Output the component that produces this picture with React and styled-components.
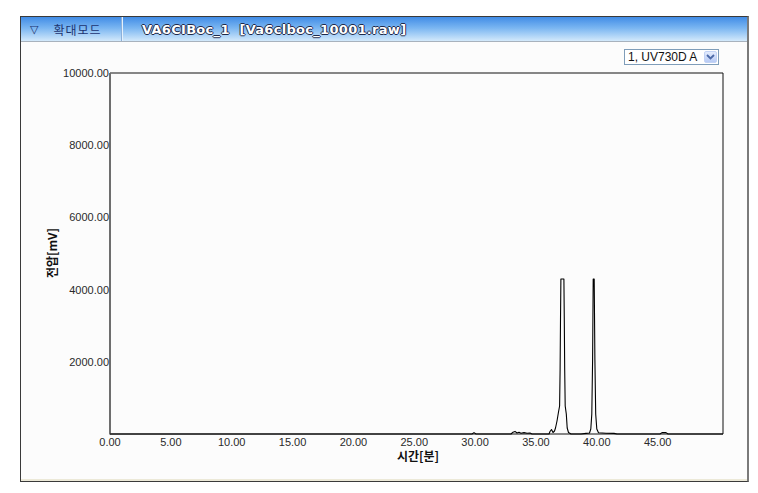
import React from 'react'
import styled, { createGlobalStyle } from 'styled-components'

// chromatogram window, page coordinates used inside the chart svg

const GlobalStyle = createGlobalStyle`
  html, body {
    margin: 0;
    padding: 0;
    background: #ffffff;
  }
  body {
    font-family: "Liberation Sans", Arial, sans-serif;
  }
`

const Page = styled.div`
  padding: 16px 0 0 20px;
`

const Window = styled.section`
  box-sizing: border-box;
  width: 729px;
  height: 466px;
  display: flex;
  flex-direction: column;
  background: #fcfcfc;
  border: 1px solid #3a3a3a;
  border-right: 2px solid #7a7a7a;
  box-shadow: inset 0 -2px 0 #ece9d8;
`

const TitleBar = styled.header`
  height: 24px;
  display: flex;
  align-items: stretch;
  background: linear-gradient(#418ce6, #79b5f1 45%, #d3e9fb);
  border-bottom: 1px solid #a8b2bd;
`

const ModeTab = styled.div`
  width: 101px;
  display: flex;
  align-items: center;
  gap: 14px;
  padding-left: 9px;
  box-sizing: border-box;
  border-right: 1px solid #8cb0da;
  box-shadow: 1px 0 0 #e4f0fc;
  color: #1c3370;
  font-family: "Noto Sans CJK KR", "DejaVu Sans", sans-serif;
  font-size: 12px;
  letter-spacing: 1px;
`

const Arrow = styled.span`
  font-family: "DejaVu Sans", sans-serif;
  font-size: 11px;
`

const Title = styled.h1`
  margin: 0;
  padding-left: 20px;
  display: flex;
  align-items: center;
  font-family: "DejaVu Sans", sans-serif;
  font-size: 13px;
  font-weight: bold;
  letter-spacing: 0.3px;
  color: #ffffff;
  white-space: pre;
  text-shadow: 1px 0 0 #1f2a4a, -1px 0 0 #1f2a4a, 0 1px 0 #1f2a4a, 0 -1px 0 #1f2a4a;
`

const Toolbar = styled.div`
  height: 23px;
  display: flex;
  justify-content: flex-end;
  align-items: flex-start;
  padding: 7px 28px 0 0;
  box-sizing: border-box;
`

const Select = styled.div`
  box-sizing: border-box;
  width: 95px;
  height: 16px;
  display: flex;
  align-items: center;
  justify-content: space-between;
  background: #ffffff;
  border: 1px solid #7f9db9;
  padding-left: 3px;
  font-size: 12px;
  color: #111;
`

const DropButton = styled.span`
  width: 13px;
  height: 12px;
  margin-right: 1px;
  display: flex;
  align-items: center;
  justify-content: center;
  border-radius: 2px;
  background: linear-gradient(#e4ecfd, #b8cbf5);
  border: 1px solid #c3d3f5;
  box-sizing: border-box;
`

const Chart = styled.svg`
  display: block;
  font-family: "Liberation Sans", Arial, sans-serif;
`

const plot = { left: 110, right: 723, top: 73, bottom: 434 }
const xTicks = [0, 5, 10, 15, 20, 25, 30, 35, 40, 45]
const yTicks = [2000, 4000, 6000, 8000, 10000]
const xPx = t => plot.left + t * 12.17
const yPx = v => plot.bottom - (v / 10000) * (plot.bottom - plot.top)

const trace = [
  [110, 434], [472, 434], [474, 432.6], [476, 434],
  [511, 434], [513, 432.2], [515, 431.4], [517, 433], [519, 432.2], [521, 433.2],
  [524, 432.6], [527, 433.3], [530, 433], [532, 434],
  [549, 434], [550, 431.5], [551.5, 429.5], [553, 432.5], [554.5, 431], [555.5, 428],
  [557, 421], [558.5, 412], [559.6, 406], [560.1, 370], [560.5, 320], [560.9, 279],
  [563.9, 279], [564.3, 320], [564.7, 370], [565.2, 406], [566.3, 414], [567.2, 428],
  [568.5, 432.5], [571, 434],
  [581, 434], [586, 433.4], [589.5, 433], [590.8, 429], [591.8, 414], [592.6, 360],
  [593.2, 279], [594.2, 279], [594.9, 360], [595.7, 414], [596.8, 429], [598.5, 432.8],
  [606, 433.2], [614, 433.4], [617, 434],
  [660, 434], [662, 432.6], [666, 432.6], [668, 434], [723, 434],
]

const tracePath = trace.map(([x, y], i) => `${i ? 'L' : 'M'}${x},${y}`).join(' ')

const Chromatogram = () => (
  <Chart width="726" height="416" viewBox="21 65 726 416">
    <line x1={plot.left} y1={plot.top} x2={plot.right} y2={plot.top} stroke="#111" />
    <line x1={plot.right} y1={plot.top} x2={plot.right} y2={plot.bottom} stroke="#111" />
    <line x1={plot.left} y1={plot.bottom} x2={plot.right} y2={plot.bottom} stroke="#111" />
    <line x1={plot.left} y1={plot.top} x2={plot.left} y2={plot.bottom + 0.5} stroke="#6e6e6e" strokeWidth="2" />

    {yTicks.map(v => (
      <text key={v} x="109" y={yPx(v) + 4} textAnchor="end" fontSize="11" fill="#2a2a2a">
        {v.toFixed(2)}
      </text>
    ))}
    {xTicks.map(t => (
      <text key={t} x={xPx(t)} y="446" textAnchor="middle" fontSize="11" fill="#2a2a2a">
        {t.toFixed(2)}
      </text>
    ))}

    <path d={tracePath} fill="none" stroke="#000" strokeWidth="1.1" strokeLinejoin="round" />

    <text
      x="418"
      y="461"
      textAnchor="middle"
      fontSize="12"
      fontWeight="bold"
      fill="#111"
      fontFamily='"Noto Sans CJK KR", "DejaVu Sans", sans-serif'
    >
      시간[분]
    </text>
    <text
      transform="translate(57 253) rotate(-90)"
      textAnchor="middle"
      fontSize="12"
      fontWeight="bold"
      fill="#111"
      fontFamily='"Noto Sans CJK KR", "DejaVu Sans", sans-serif'
    >
      전압[mV]
    </text>
  </Chart>
)

const App = () => (
  <Page>
    <GlobalStyle />
    <Window>
      <TitleBar>
        <ModeTab>
          <Arrow>▽</Arrow>
          <span>확대모드</span>
        </ModeTab>
        <Title>VA6CIBoc_1  [Va6clboc_10001.raw]</Title>
      </TitleBar>
      <Toolbar>
        <Select>
          <span>1, UV730D A</span>
          <DropButton>
            <svg width="9" height="6" viewBox="0 0 9 6">
              <path d="M1 1 L4.5 4.5 L8 1" fill="none" stroke="#4d6aa8" strokeWidth="1.8" />
            </svg>
          </DropButton>
        </Select>
      </Toolbar>
      <Chromatogram />
    </Window>
  </Page>
)

export default App
